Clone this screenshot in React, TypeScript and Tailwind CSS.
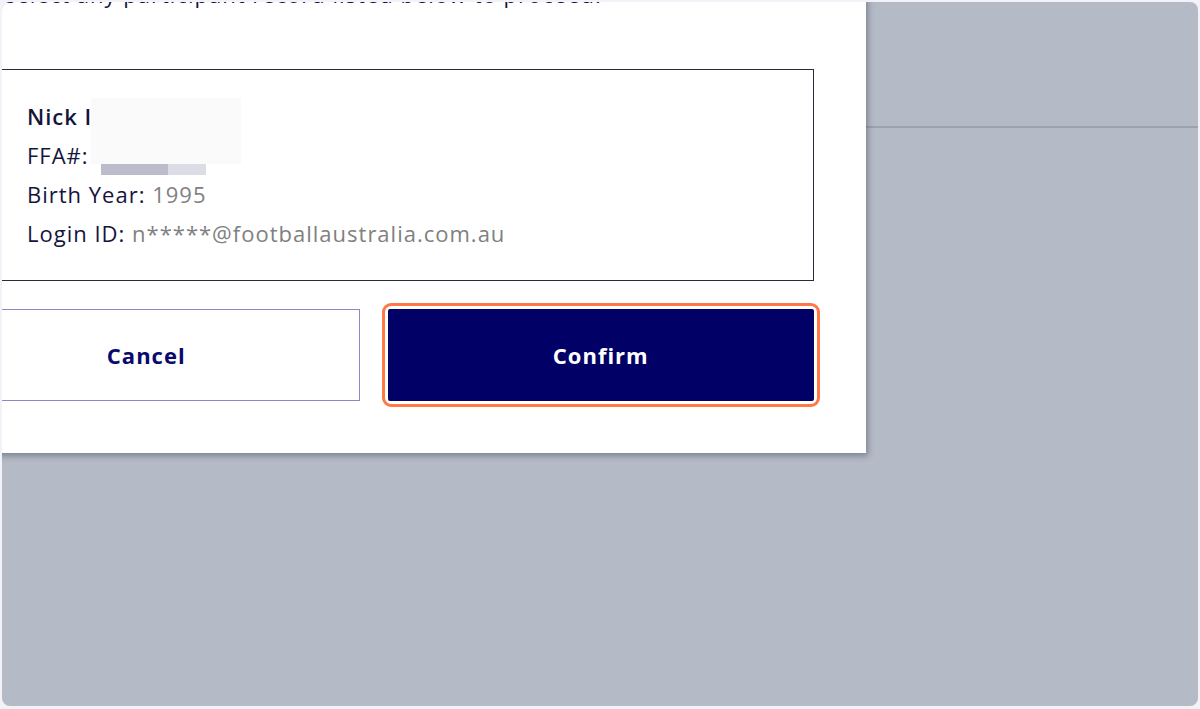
export default function App() {
  return (
    <div className="h-[709px] w-[1200px] bg-[#f3f2f8] pt-[2px] pl-[2px] pr-[2px] pb-[3px] font-['Open_Sans','Lato',sans-serif]">
      <div className="relative h-full w-full overflow-hidden rounded-lg bg-[#b4bac6]">
        {/* page header behind the overlay */}
        <div className="h-[126px] border-b-2 border-[#9ca2ae]" />

        {/* modal */}
        <div className="absolute left-[-121px] top-[-23px] w-[985px] bg-white px-[52px] pb-[52px] shadow-[2px_3px_6px_rgba(60,66,80,0.45)]">
          <p className="ml-[72px] whitespace-nowrap text-[22px] leading-[30px] tracking-[1px] text-[#14143c]">
            select any participant record listed below to proceed.
          </p>

          <div className="mt-[60px] border border-[#2a2a3a] py-[27px] pl-[93px] text-[22px] leading-[39px] tracking-[1px] text-[#14143c]">
            <div className="relative font-semibold">
              Nick I
              <span className="absolute left-[64px] top-[1px] h-[66px] w-[150px] bg-[#fafafa]" />
            </div>
            <div className="relative">
              FFA#:
              <span className="absolute left-[74px] top-[28px] flex h-[11px] w-[105px]">
                <span className="h-full w-[67px] bg-[#bcbccd]" />
                <span className="h-full flex-1 bg-[#dcdce6]" />
              </span>
            </div>
            <div>
              Birth Year: <span className="text-[#808080]">1995</span>
            </div>
            <div>
              Login ID: <span className="text-[#808080]">n*****@footballaustralia.com.au</span>
            </div>
          </div>

          <div className="mt-[28px] grid grid-cols-2 gap-[28px]">
            <button className="h-[92px] border border-[#8a8ac8] bg-white text-[22px] font-bold tracking-[1px] text-[#0a0a6e]">
              Cancel
            </button>
            <button className="relative h-[92px] rounded-[2px] bg-[#000066] text-[22px] font-bold tracking-[1px] text-white">
              Confirm
              <span className="pointer-events-none absolute inset-[-6px] rounded-[9px] border-[3px] border-[#ff7845]" />
            </button>
          </div>
        </div>
      </div>
    </div>
  );
}
